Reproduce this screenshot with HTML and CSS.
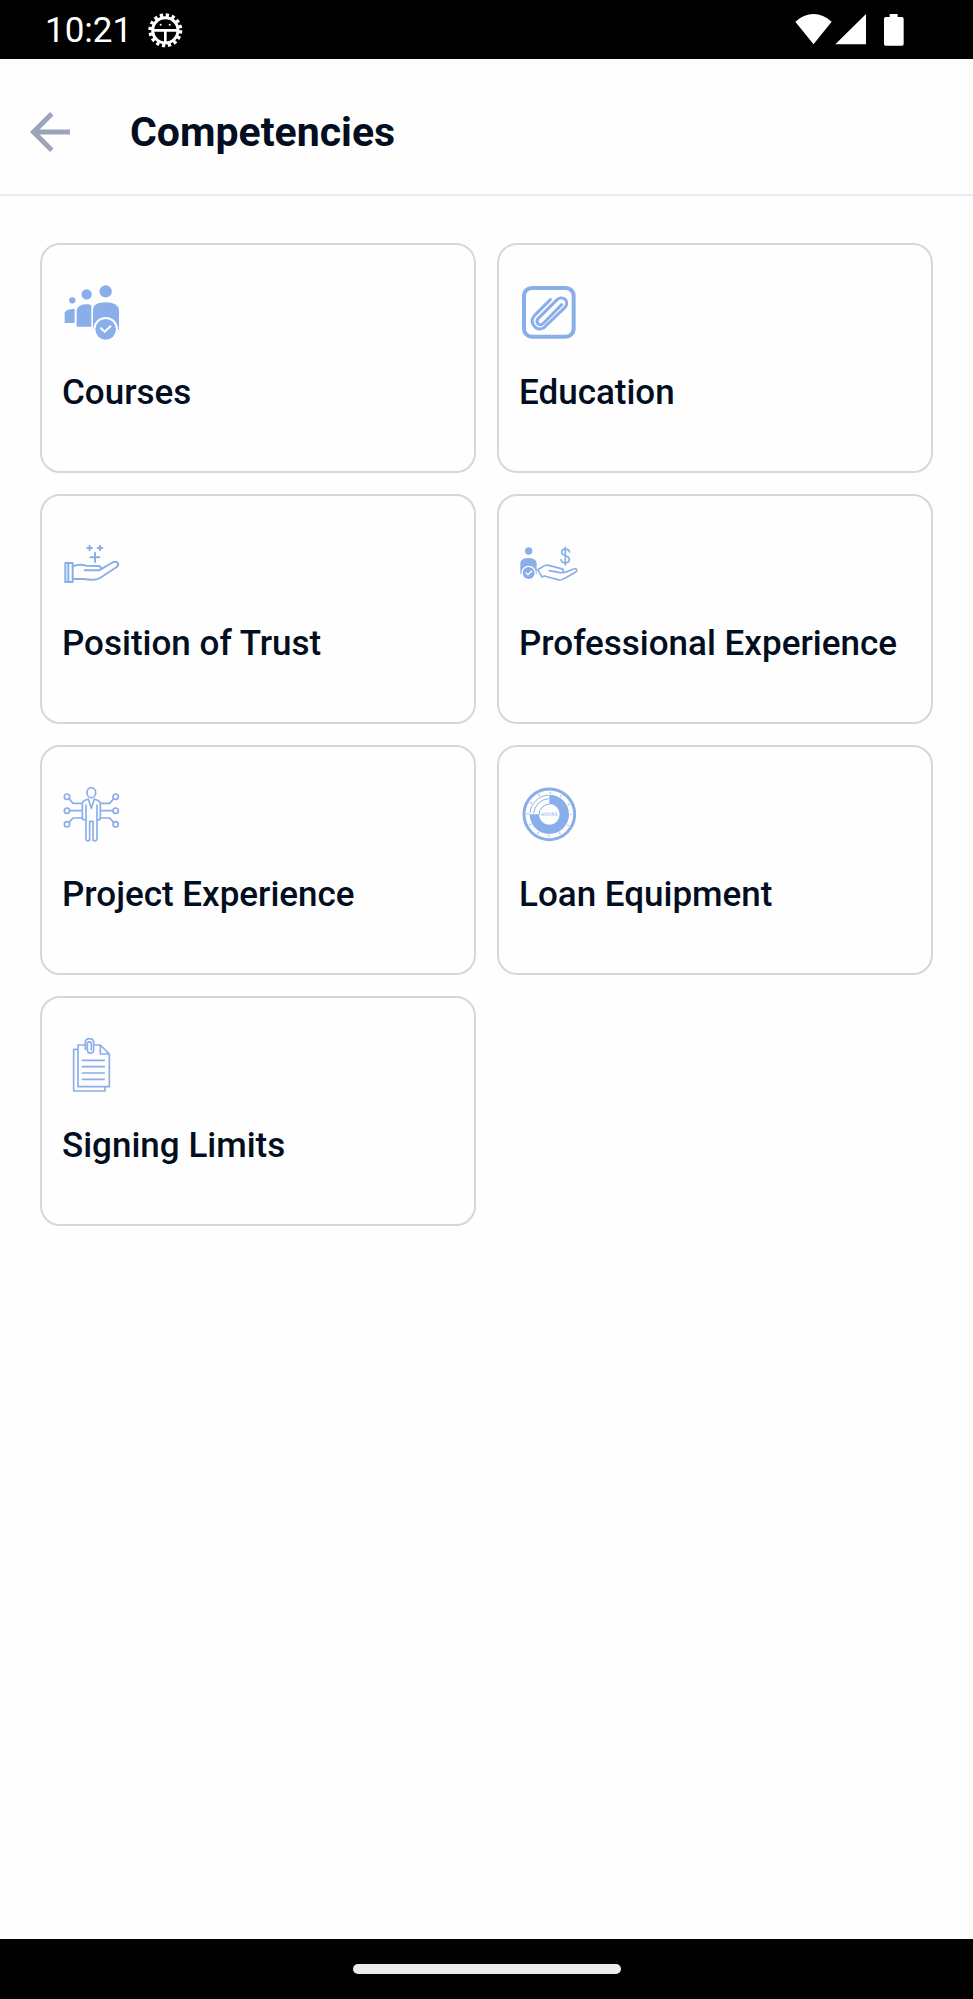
FILE: index.html
```html
<!DOCTYPE html>
<html lang="en">
<head>
    <meta charset="UTF-8">
    <meta name="viewport" content="width=device-width, initial-scale=1.0">
    <title>Competencies</title>
    <link rel="stylesheet" href="styles.css">
</head>
<body>
    <div class="status-bar">
        <span class="time">10:21</span>
        <svg class="gear" viewBox="444 39 108 108" width="36" height="36" aria-hidden="true">
            <circle cx="496" cy="91" r="45" fill="none" stroke="#fff" stroke-width="12" stroke-dasharray="9.500 8.170"/>
            <circle cx="496" cy="91" r="38" fill="none" stroke="#fff" stroke-width="9"/>
            <path d="M460 91h72M496 91v38" fill="none" stroke="#fff" stroke-width="8"/>
            <circle cx="482" cy="74" r="3" fill="#fff"/>
            <circle cx="509" cy="74" r="3" fill="#fff"/>
        </svg>
        <div class="status-icons">
            <svg viewBox="105 39 111 108" width="37" height="36" aria-hidden="true">
                <path d="M106 65Q131 42 160.500 42T215 65L160.500 133Z" fill="#fff"/>
            </svg>
            <svg viewBox="225 39 96 108" width="32" height="36" aria-hidden="true">
                <path d="M318 42V133H226Z" fill="#fff"/>
            </svg>
            <svg class="battery" viewBox="369 39 66 108" width="22" height="36" aria-hidden="true">
                <path d="M389 42h24v9h13q5 0 5 5v76q0 5-5 5h-49q-5 0-5-5V56q0-5 5-5h12z" fill="#fff"/>
            </svg>
        </div>
    </div>

    <header class="header">
        <button type="button" class="back" aria-label="Back">
            <svg viewBox="0 0 24 24" width="60" height="60"><path d="M20 11H7.830l5.590-5.590L12 4l-8 8 8 8 1.410-1.410L7.830 13H20v-2z" fill="#9aa5b8"/></svg>
        </button>
        <h1>Competencies</h1>
    </header>

    <main class="cards">
        <a class="card" href="#courses">
            <svg class="icon" viewBox="96 156 180 180" aria-hidden="true">
                <g class="solid">
                    <circle cx="127" cy="211" r="9.500"/>
                    <circle cx="170" cy="193" r="15.500"/>
                    <circle cx="227" cy="184" r="18.500"/>
                    <path d="M104 279V250Q106 237 134 236V279Z"/>
                    <path d="M140 290V240Q144 223 170 223Q180 223 184 226V290Z"/>
                    <path d="M189 300V240Q190 217 227 217T267 240V300Z"/>
                </g>
                <circle cx="227" cy="298" r="37" fill="#fff"/>
                <circle class="solid" cx="227" cy="298" r="31"/>
                <path d="M211 293l13 12 19-18" fill="none" stroke="#fff" stroke-width="6"/>
            </svg>
            <span>Courses</span>
        </a>

        <a class="card" href="#education">
            <svg class="icon" viewBox="87 156 180 180" aria-hidden="true">
                <rect class="line" x="102" y="174" width="149" height="146" rx="23" stroke-width="12"/>
                <path class="line" stroke-width="9" d="M181 209L133 257C117 276 136 305 161 294L225 232C241 213 217 193 199 211L145 265C134 278 149 291 161 279L215 224"/>
            </svg>
            <span>Education</span>
        </a>

        <a class="card" href="#trust">
            <svg class="icon" viewBox="36 39 180 180" aria-hidden="true">
                <g class="line" stroke-width="6">
                    <path d="M112 84h14M119 77v14M143 84h14M150 77v14M121 112h27M135 98v28"/>
                    <path d="M46 129h22v57H46zM55 129v57"/>
                    <path d="M69 139C84 132 98 134 108 137L146 138C155 140 155 148 148 151H104M151 149L190 126C204 122 209 133 200 141L150 174C134 184 119 178 102 177H69"/>
                </g>
            </svg>
            <span>Position of Trust</span>
        </a>

        <a class="card" href="#professional">
            <svg class="icon" viewBox="27 39 180 180" aria-hidden="true">
                <g class="solid">
                    <circle cx="56" cy="93" r="11"/>
                    <path d="M31 162V129Q33 114 55 114T80 129V162Z"/>
                </g>
                <circle cx="56" cy="159" r="22" fill="#fff"/>
                <circle class="solid" cx="56" cy="159" r="18"/>
                <path d="M47 158l7 6 12-12" fill="none" stroke="#fff" stroke-width="4"/>
                <path class="line" stroke-width="5" d="M179 96C175 84 155 85 155 97C155 110 178 104 178 118C178 132 155 132 153 119M166 82v53"/>
                <path class="line" stroke-width="5" d="M118 152L150 158C164 160 163 146 151 145L116 136Q107 134 98 140L83 149L96 171L103 168L144 179Q153 182 162 176L196 157C204 151 200 144 191 147L162 158"/>
            </svg>
            <span>Professional Experience</span>
        </a>

        <a class="card" href="#project">
            <svg class="icon" viewBox="36 43 180 180" aria-hidden="true">
                <g class="line" stroke-width="5">
                    <ellipse cx="124" cy="69" rx="13" ry="15"/>
                    <path d="M115 88L102 93Q97 96 97 104V144Q97 151 108 151V208Q110 216 119 212V155H129V212Q138 216 141 208V151Q151 151 151 144V104Q151 96 146 93L133 88L124 116L115 88M108 106V151M141 106V151"/>
                    <circle cx="51" cy="81" r="8"/>
                    <circle cx="51" cy="123" r="8"/>
                    <circle cx="51" cy="164" r="8"/>
                    <circle cx="197" cy="81" r="8"/>
                    <circle cx="197" cy="123" r="8"/>
                    <circle cx="197" cy="164" r="8"/>
                    <path d="M57 87L69 101H96M59 123H96M57 158L69 145H96M191 87L179 101H152M189 123H152M191 158L179 145H152"/>
                </g>
            </svg>
            <span>Project Experience</span>
        </a>

        <a class="card" href="#equipment">
            <svg class="icon" viewBox="27 43 180 180" aria-hidden="true">
                <circle class="line" cx="118" cy="134" r="76" stroke-width="9"/>
                <circle class="line" cx="118" cy="134" r="65" stroke-width="6" stroke-dasharray="3 31.030" stroke-dashoffset="1"/>
                <path class="solid" d="M118 75A59 59 0 1 1 59 134H87A31 31 0 1 0 118 103Z"/>
                <path class="line" stroke-width="3" d="M60 130A58 58 0 0 1 115 76M71 130A47 47 0 0 1 115 87M87 134A31 31 0 0 1 118 103"/>
                <text x="118" y="139" text-anchor="middle">HOURS</text>
            </svg>
            <span>Loan Equipment</span>
        </a>

        <a class="card" href="#signing">
            <svg class="icon" viewBox="36 46 180 180" aria-hidden="true">
                <g class="line" stroke-width="5">
                    <path d="M105 76H84V201H178V103L151 76H131M151 76V103H178"/>
                    <path d="M82 89H71V214H165V203"/>
                    <path d="M97 122h66M97 141h66M97 160h66M97 179h66"/>
                    <path d="M106 89V68C106 53 131 53 131 68V90C131 105 112 103 112 90V72C112 65 124 65 124 72V91"/>
                </g>
            </svg>
            <span>Signing Limits</span>
        </a>
    </main>

    <footer class="nav-bar">
        <div class="handle"></div>
    </footer>
</body>
</html>
```

FILE: styles.css
```css
* {
    box-sizing: border-box;
}
body {
    display: flex;
    flex-direction: column;
    min-height: 100vh;
    margin: 0;
    font-family: Roboto, sans-serif;
    background-color: #fefefe;
    color: #030e20;
}
.status-bar {
    display: flex;
    align-items: center;
    height: 59px;
    padding: 3px 68px 0 45px;
    background-color: #000;
    color: #fff;
}
.time {
    font-size: 35px;
    line-height: 40px;
}
.gear {
    margin-left: 16px;
}
.status-icons {
    display: flex;
    gap: 3px;
    margin-left: auto;
}
.battery {
    margin-left: 13px;
}
.header {
    display: flex;
    align-items: center;
    gap: 50px;
    padding: 43px 20px 32px;
    border-bottom: 2px solid #e9eaee;
}
.back {
    display: flex;
    padding: 0;
    border: none;
    background: none;
    cursor: pointer;
}
h1 {
    margin: 0;
    font-size: 41px;
    font-weight: 700;
    line-height: 48px;
}
.cards {
    display: grid;
    grid-template-columns: 1fr 1fr;
    gap: 21px;
    padding: 47px 40px;
}
.card {
    display: flex;
    flex-direction: column;
    gap: 31px;
    min-height: 230px;
    padding: 37px 20px;
    border: 2px solid #d4d7df;
    border-radius: 20px;
    color: inherit;
    font-size: 35px;
    font-weight: 500;
    line-height: 40px;
    text-decoration: none;
}
.icon {
    width: 60px;
    height: 60px;
}
.solid {
    fill: #8aaeea;
}
.line {
    fill: none;
    stroke: #8aaeea;
    stroke-linecap: round;
    stroke-linejoin: round;
}
.icon circle.line {
    stroke-linecap: butt;
}
.icon text {
    fill: #8aaeea;
    font-family: "DejaVu Sans", sans-serif;
    font-size: 14px;
}
.nav-bar {
    display: flex;
    align-items: center;
    justify-content: center;
    height: 60px;
    margin-top: auto;
    background-color: #000;
}
.handle {
    width: 268px;
    height: 10px;
    border-radius: 5px;
    background-color: #ebebeb;
}
```
